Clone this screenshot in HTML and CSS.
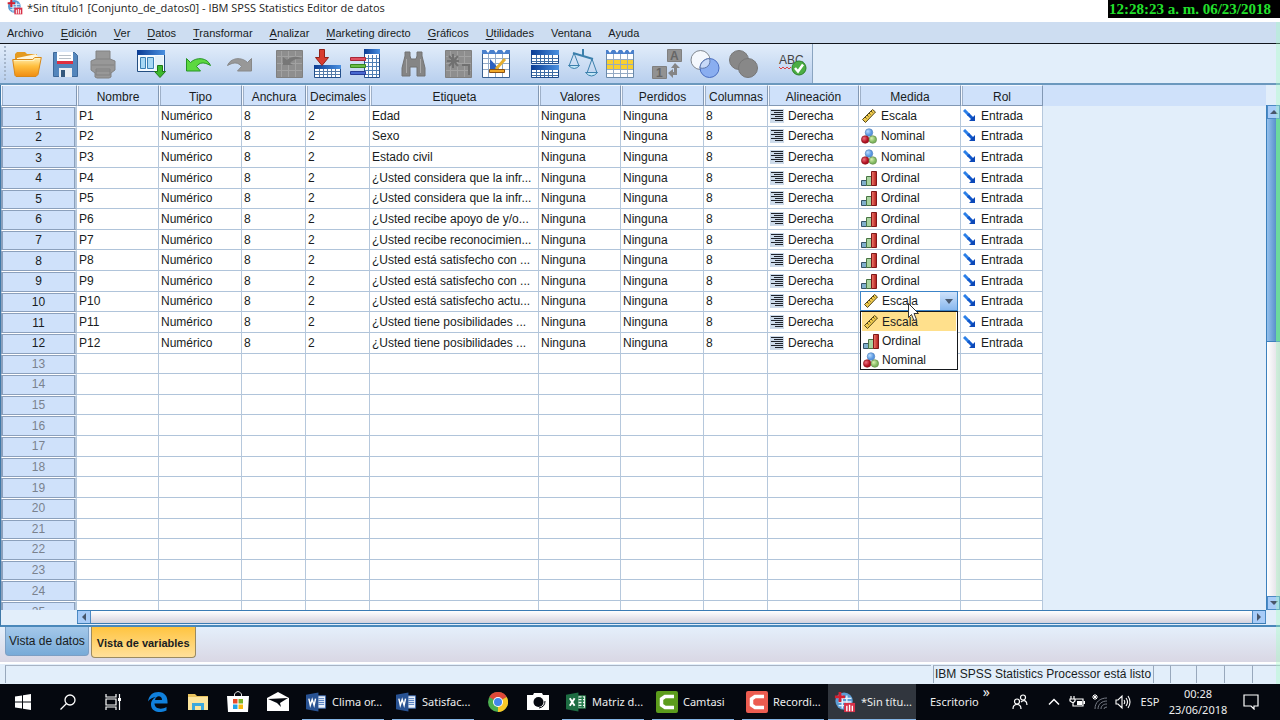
FILE: index.html
```html
<!DOCTYPE html>
<html lang="es">
<head>
<meta charset="utf-8">
<title>*Sin título1 [Conjunto_de_datos0] - IBM SPSS Statistics Editor de datos</title>
<link rel="stylesheet" href="styles.css">
</head>
<body>
<svg class="defs" aria-hidden="true">
  <defs>
    <linearGradient id="g-folder" x1="0" y1="0" x2="0" y2="1"><stop offset="0" stop-color="#fff0b8"/><stop offset=".45" stop-color="#ffc040"/><stop offset="1" stop-color="#f08c10"/></linearGradient>
    <linearGradient id="g-blue" x1="0" y1="0" x2="1" y2="0"><stop offset="0" stop-color="#0a3c94"/><stop offset="1" stop-color="#4a90e0"/></linearGradient>
    <linearGradient id="g-red" x1="0" y1="0" x2="1" y2="0"><stop offset="0" stop-color="#f08070"/><stop offset="1" stop-color="#b01818"/></linearGradient>
    <radialGradient id="g-rball" cx=".35" cy=".35"><stop offset="0" stop-color="#f07080"/><stop offset="1" stop-color="#b01020"/></radialGradient>
    <radialGradient id="g-bball" cx=".35" cy=".35"><stop offset="0" stop-color="#b8dcff"/><stop offset="1" stop-color="#5896e0"/></radialGradient>
    <radialGradient id="g-gball" cx=".35" cy=".35"><stop offset="0" stop-color="#d8f0b0"/><stop offset="1" stop-color="#80b860"/></radialGradient>
    <symbol id="right" viewBox="0 0 14 14"><path fill="#ccdaea" d="M0 0h14v14H0z"/><path stroke="#20242c" d="M1 1.500h12M4 3.500h9M1 5.500h12M5 7.500h8M1 9.500h12M5 11.500h8"/></symbol>
    <symbol id="escala" viewBox="0 0 16 16"><path fill="#edc84c" stroke="#55481a" d="M1.500 11.500 11.500 1.500l3 2.500-10 10.500z"/><path stroke="#55481a" d="m4 9 1.500 1.500M6 7l1.500 1.500M8 5l1.500 1.500M10 3l1.500 1.500"/></symbol>
    <symbol id="nominal" viewBox="0 0 16 16"><circle cx="8" cy="4.500" r="3.800" fill="url(#g-bball)" stroke="#5080b8" stroke-width=".6"/><circle cx="4.200" cy="11.500" r="3.800" fill="url(#g-rball)" stroke="#801018" stroke-width=".6"/><circle cx="11.800" cy="11.500" r="3.800" fill="url(#g-gball)" stroke="#588040" stroke-width=".6"/></symbol>
    <symbol id="ordinal" viewBox="0 0 16 16"><path fill="#80b0cc" stroke="#365468" d="M.5 10.500h5v5h-5z"/><path fill="#a8d4a0" stroke="#4a7444" d="M5.500 6.500h5v9h-5z"/><path fill="url(#g-red)" stroke="#801818" d="M10.500 1.500h5v14h-5z"/></symbol>
    <symbol id="entrada" viewBox="0 0 14 14"><path stroke="#2c80e8" stroke-width="3" d="m1 1 5 5"/><path stroke="#1058cc" stroke-width="3" d="m5 5 5 5"/><path fill="#0c48b8" d="M12 6v6H6z"/></symbol>
    <symbol id="spss" viewBox="0 0 24 24"><circle cx="11" cy="11" r="9.500" fill="#5c9cd4"/><path stroke="#e6f2fc" stroke-width="1.500" fill="none" d="M5 8h14M5 12h14M5 16h10M9 5v14M14 5v14"/><path fill="#d42030" d="M5 1h3v4h4v3H8v4H5V8H1V5h4z"/><path fill="#d83048" d="M11 13h12v10H11z"/><path stroke="#fff" stroke-width="1.500" d="M14 16v6M17 15v7M20 16v6"/></symbol>
    <symbol id="word" viewBox="0 0 22 20"><path fill="#e8f0fa" stroke="#3a66ac" d="M11 3.500h9.500v13H11z"/><path stroke="#4a78bc" d="M13 6.500h6M13 8.500h6M13 10.500h6M13 12.500h6"/><path fill="#285293" d="M0 2.500 13 0v20L0 17.500z"/><path fill="none" stroke="#fff" stroke-width="1.500" d="m3 6.500 1.500 7 2-6 2 6L10 6.500"/></symbol>
  </defs>
</svg>

<div class="window">
  <header class="titlebar">
    <svg class="i16"><use href="#spss"/></svg>
    <h1>*Sin título1 [Conjunto_de_datos0] - IBM SPSS Statistics Editor de datos</h1>
    <time class="stamp">12:28:23 a. m. 06/23/2018</time>
  </header>

  <nav class="menubar">
    <button>Archivo</button><button><u>E</u>dición</button><button><u>V</u>er</button><button><u>D</u>atos</button><button><u>T</u>ransformar</button><button><u>A</u>nalizar</button><button><u>M</u>arketing directo</button><button><u>G</u>ráficos</button><button><u>U</u>tilidades</button><button>Ventana</button><button>Ayuda</button>
  </nav>

  <div class="toolrow">
    <div class="toolbar" role="toolbar" aria-label="Herramientas">
      <span class="grip"></span>
      <div class="group">
        <button aria-label="Abrir"><svg viewBox="0 0 30 30"><path fill="#e49a20" d="M3 25V5l2-2h8l2 2h10v5l-3 17z"/><path fill="#fff6dc" d="m5 9 19-4 2 3v14H5z"/><path fill="url(#g-folder)" stroke="#d88818" d="M.7 10.500h20l2-2h6.600L26 25.500l-2 2H4l-1-1z"/><path stroke="#fff3c0" d="M2 11.500h20l1-2h5"/></svg></button>
        <button aria-label="Guardar"><svg viewBox="0 0 30 30"><path fill="#5486bc" stroke="#3e6898" d="M3.500 3.500h21l3 3v21h-24z"/><path fill="#fff" d="M7 3h16v12H7z"/><path stroke="#b8c0c8" d="M9 6.500h12M9 9.500h12"/><path fill="#e03040" d="M7 12h16v3H7z"/><path fill="#e8edf2" d="M9 19h13v9H9z"/><path fill="#34587c" d="M11 21h4v7h-4z"/></svg></button>
        <button aria-label="Imprimir"><svg viewBox="0 0 30 30"><path fill="#989898" stroke="#828282" d="M8 2h14v8l5 2v9l-4 3v4l-2 1H9l-2-1v-4l-4-3v-9l5-2z"/><path stroke="#828282" fill="none" d="M8 10h14M4 16h22M8 20h14v6H8zM8 22h14"/></svg></button>
      </div>
      <div class="group">
        <button aria-label="Cuadros recientes"><svg viewBox="0 0 30 30"><path fill="#f4faff" stroke="#234e80" d="M1.500 1.500h27v21h-27z"/><path fill="url(#g-blue)" d="M1 1h28v5H1z"/><path fill="#a8d8f4" stroke="#3a80b4" d="M4.500 8.500h5v11h-5zM11.500 8.500h6v11h-6z"/><path fill="#e4f0f8" d="M19 7h8v14h-8z"/><path fill="#3cb82c" stroke="#207818" d="M21.500 16.500h5v6h3L24 28.500l-5.500-6h3z"/></svg></button>
      </div>
      <div class="group">
        <button aria-label="Deshacer"><svg viewBox="0 0 30 30"><path fill="#5cd840" stroke="#269424" d="m2.500 9.500 4 4c6-6 17-5 20 3-7-4-11-3-14 1l4 4.500h-14z"/></svg></button>
        <button aria-label="Rehacer"><svg viewBox="0 0 30 30"><path fill="#989898" stroke="#888" d="m29.500 9.500-4 4c-6-6-17-5-20 3 7-4 11-3 14 1l-4 4.500h14z"/></svg></button>
      </div>
      <div class="group wide">
        <button aria-label="Ir a caso"><svg viewBox="0 0 30 30"><path fill="#8e8e8e" stroke="#808080" d="M2.500 1.500h26v27h-26z"/><path stroke="#a2a2a2" d="M7.500 2v26M14.500 2v26M21.500 2v26M3 7.500h25M3 14.500h25M3 21.500h25"/><path fill="#777" d="M9 8l4 3c5-4 11-4 15-1-6-1-9 1-12 4l3 2H9z"/></svg></button>
        <button aria-label="Ir a variable"><svg viewBox="0 0 30 30"><path fill="#fff" stroke="#24508c" d="M2.500 17.500h26v11h-26z"/><path fill="url(#g-blue)" d="M2 16h27v4H2z"/><path stroke="#547aa8" d="M3 22.500h25M3 25.500h25M7.500 20v8M11.500 20v8M15.500 20v8M19.500 20v8M23.500 20v8"/><path fill="#d83c30" stroke="#902018" d="M7.500.5h5v8h4L10 16.500l-6.500-8h4z"/></svg></button>
        <button aria-label="Variables"><svg viewBox="0 0 30 30"><path fill="#fff" stroke="#24508c" d="M14.500.5h15v28h-15z"/><path fill="url(#g-blue)" d="M14 0h16v5H14z"/><path stroke="#5080b4" d="M15 9.500h14M15 13.500h14M15 17.500h14M15 21.500h14M15 25.500h14M18.500 6v22M22.500 6v22M26.500 6v22"/><path fill="#e05060" stroke="#a82838" d="M.5 8.500h15v3H.5z"/><path fill="#68bc44" stroke="#388820" d="M.5 15.500h15v3H.5z"/><path fill="#4868d0" stroke="#283c98" d="M.5 22.500h15v3H.5z"/></svg></button>
      </div>
      <div class="group">
        <button aria-label="Buscar"><svg viewBox="0 0 30 30"><path fill="#858585" stroke="#727272" d="M7 3h5v4l1 3h5l1-3V3h5v4l3 12v8h-8v-9h-7v9H4v-8L7 7z"/><path stroke="#aaa" d="M8.500 10v14M22.500 10v14"/></svg></button>
      </div>
      <div class="group tight">
        <button aria-label="Insertar caso"><svg viewBox="0 0 30 30"><path fill="#8e8e8e" stroke="#808080" d="M1.500 1.500h26v27h-26z"/><path stroke="#a2a2a2" d="M6.500 2v26M13.500 2v26M20.500 2v26M2 7.500h25M2 14.500h25M2 21.500h25"/><path stroke="#707070" stroke-width="2" fill="none" d="M9 5v14M3 12h12M5 7l9 10M14 7 5 17M18 16h7v10"/></svg></button>
        <button aria-label="Insertar variable"><svg viewBox="0 0 30 30"><path fill="#fff" stroke="#3a6090" d="M.5 1.500h27v27H.5z"/><path fill="#4a80cc" d="M0 1h28v4H0z"/><path stroke="#92aac8" d="M6.500 5v23M13.500 5v23M20.500 5v23M1 9.500h26M1 14.500h26M1 20.500h26"/><path fill="#fff" d="m4 1 2 3 2-3zm8 0 2 3 2-3zm8 0 2 3 2-3z"/><path fill="#2c60c0" d="M8 10v11h10z"/><path stroke="#e4ae30" stroke-width="3" d="m14 20 9-10"/><path fill="#f0a828" stroke="#8c5010" d="M7.500 20.500h15v3h-15z"/></svg></button>
      </div>
      <div class="group">
        <button aria-label="Segmentar archivo"><svg viewBox="0 0 30 30"><path fill="#fff" stroke="#1c4a8c" d="M1.500 1.500h27v13h-27zM1.500 16.500h27v12h-27z"/><path fill="url(#g-blue)" d="M1 1h28v5H1zM1 16h28v5H1z"/><path stroke="#3e6ca4" d="M2 9.500h26M2 12.500h26M2 23.500h26M2 26.500h26M6.500 6v8M10.500 6v8M14.500 6v8M18.500 6v8M22.500 6v8M6.500 21v7M10.500 21v7M14.500 21v7M18.500 21v7M22.500 21v7"/></svg></button>
        <button aria-label="Ponderar casos"><svg viewBox="0 0 30 30"><g fill="none" stroke="#3c80ac"><path stroke-width="2" d="m5 4 20 6M15 0v7"/><path d="M6 4 1 17h10zM24 10l-5 14h10z"/></g><path fill="#c4e8f8" stroke="#3c80ac" d="M.5 16.500h11q-5 6-11 0zM17.500 23.500h12q-6 7-12 0z"/></svg></button>
        <button aria-label="Seleccionar casos"><svg viewBox="0 0 30 30"><path fill="#fff" stroke="#6a8aaa" d="M.5 1.500h27v27H.5z"/><path fill="#4a80cc" d="M0 1h28v4H0z"/><path fill="#f8d030" d="M1 11h26v9H1z"/><path stroke="#94aac4" d="M7.500 5v23M14.500 5v23M21.500 5v23M1 10.500h26M1 15.500h26M1 20.500h26M1 24.500h26"/><path fill="#fff" d="m2 1 2 3 2-3zm7 0 2 3 2-3zm7 0 2 3 2-3zm6 0 2 3 2-3z"/></svg></button>
      </div>
      <div class="group tight">
        <button aria-label="Etiquetas de valor"><svg class="lettered" viewBox="0 0 30 30"><path fill="#929292" stroke="#808080" d="M15.500.5h14v12h-14zM.5 17.500h14v12H.5z"/><text x="18" y="11">A</text><text x="4" y="28">1</text><path fill="#858585" d="m23 14-4 5h3v4h-1v-3l-5 4 5 5v-3h4v-7h3z"/></svg></button>
        <button aria-label="Usar conjuntos"><svg viewBox="0 0 30 30"><circle cx="10.500" cy="11" r="9.500" fill="#f4f8fd" stroke="#80878f"/><circle cx="19.500" cy="19" r="9.500" fill="#8aaef0" stroke="#4a6ec0"/><path fill="#c8daf8" stroke="#6078a8" d="M10 19c0-5 4-9 9.500-9.500 2 6-3 11-9.500 9.500z"/></svg></button>
        <button aria-label="Mostrar todas las variables"><svg viewBox="0 0 30 30"><circle cx="11" cy="11" r="9.500" fill="#888" stroke="#777"/><circle cx="20" cy="19" r="9.500" fill="#888" stroke="#777"/></svg></button>
      </div>
      <div class="group">
        <button aria-label="Ortografía"><svg class="abc" viewBox="0 0 30 30"><text x="3" y="15">ABC</text><path fill="none" stroke="#e04040" d="m3 18 2 2 2-2 2 2 2-2 2 2 2-2"/><circle cx="23" cy="19" r="7" fill="#4cae44" stroke="#2c8028"/><path fill="none" stroke="#fff" stroke-width="2.500" d="m19 19 3 3.500 5-7"/></svg></button>
      </div>
    </div>
  </div>

  <main class="editor">
    <div class="sheet">
      <table class="vars">
        <colgroup><col class="w76"><col class="w82"><col class="w83"><col class="w64"><col class="w64"><col class="w169"><col class="w82"><col class="w83"><col class="w64"><col class="w91"><col class="w102"><col class="w82"></colgroup>
        <thead><tr><th aria-label="Fila"></th><th>Nombre</th><th>Tipo</th><th>Anchura</th><th>Decimales</th><th>Etiqueta</th><th>Valores</th><th>Perdidos</th><th>Columnas</th><th>Alineación</th><th>Medida</th><th>Rol</th></tr></thead>
        <tbody id="rows"></tbody>
      </table>
    </div>
    <div class="vscroll"><span class="btn up"></span><span class="thumb"></span><span class="track"></span><span class="btn down"></span></div>
    <div class="hscroll"><span class="btn left"></span><span class="track"></span><span class="btn next"></span></div>
  </main>

  <div class="views">
    <button class="view">Vista de datos</button>
    <button class="view active">Vista de variables</button>
  </div>

  <footer class="status">
    <span class="message"></span><span class="processor">IBM SPSS Statistics Processor está listo</span><span class="slot"></span><span class="slot m"></span><span class="slot l"></span><span class="slot l"></span><span class="slot l"></span>
  </footer>
  <span class="edge"></span>
</div>

<div class="taskbar">
  <div class="system">
    <button aria-label="Inicio"><svg class="i16" viewBox="0 0 16 16"><path fill="#fff" d="m0 2.500 7-1v6H0zM8 1.300 16 0v7.500H8zM0 8.500h7v6l-7-1zM8 8.500h8V16l-8-1.300z"/></svg></button>
    <button aria-label="Buscar"><svg class="i16" viewBox="0 0 16 16"><g fill="none" stroke="#fff" stroke-width="1.300"><circle cx="10" cy="6" r="5"/><path d="M6.500 9.500.5 15.500"/></g></svg></button>
    <button aria-label="Vista de tareas"><svg class="i16" viewBox="0 0 16 16"><path fill="none" stroke="#fff" stroke-width="1.200" d="M1 0v3h10V0M1 5h10v6H1zM1 16v-3h10v3M14.500 0v16"/><path fill="#fff" d="M13 4h3v3h-3z"/></svg></button>
  </div>
  <div class="pins first">
    <button aria-label="Edge"><svg class="i20" viewBox="0 0 20 20"><path fill="#1080dc" d="M0 9.500C1 3 5 0 10.500 0 17 0 20 5 19.500 11.500H6.500c.3 5.500 7 6.500 12 3.500v3.500C11 22 3 19.500 3 12.500 3 8.500 5.500 6 8 5 4.500 5.500 1.500 7 0 9.500zM7 8h7c0-5-6-5-7 0z"/></svg></button>
    <button aria-label="Explorador"><svg class="i20" viewBox="0 0 20 20"><path fill="#e8c25c" d="M0 2h7l2 2h11v14H0z"/><path fill="#fbe49c" d="M0 5h20v13H0z"/><path fill="#3ca8dc" d="M4 11h12v7h-3v-4H7v4H4z"/></svg></button>
    <button aria-label="Tienda"><svg class="i22" viewBox="0 0 22 22"><path fill="none" stroke="#ddd" d="M7.500 6V3q3.500-5 7 0v3"/><path fill="#fff" d="M0 5h22l-1 16H1z"/><path fill="#e84c28" d="M6 8h4.500v4.500H6z"/><path fill="#78b428" d="M11.500 8H16v4.500h-4.500z"/><path fill="#20a4e8" d="M6 13.500h4.500V18H6z"/><path fill="#f8b810" d="M11.500 13.500H16V18h-4.500z"/></svg></button>
    <button aria-label="Correo"><svg class="i22" viewBox="0 0 22 20"><path fill="#fff" d="m0 6 11-6 11 6v13H0z"/><path fill="#05080f" d="m1 7 20-1-8 5 1 4-4-4z"/></svg></button>
  </div>
  <button class="task"><svg class="i20w"><use href="#word"/></svg>Clima or...</button>
  <button class="task"><svg class="i20w"><use href="#word"/></svg>Satisfac...</button>
  <div class="pins">
    <button aria-label="Chrome"><svg class="i20" viewBox="0 0 20 20"><circle cx="10" cy="10" r="10" fill="#4caf50"/><path fill="#e04838" d="M10 10 1.300 5A10 10 0 0 1 18.700 5z"/><path fill="#f8c828" d="M10 10l8.700-5A10 10 0 0 1 10 20z"/><circle cx="10" cy="10" r="5" fill="#fff"/><circle cx="10" cy="10" r="4" fill="#4486ec"/></svg></button>
    <button aria-label="Cámara"><svg class="i22" viewBox="0 0 22 20"><path fill="#fff" d="M0 3h6l1-2h8l1 2h6v15H0z"/><circle cx="11.500" cy="10" r="5" fill="#05080f"/><path stroke="#05080f" fill="none" d="M18 9q0 6-6 7"/></svg></button>
  </div>
  <button class="task"><svg class="i20w" viewBox="0 0 22 20"><path fill="#eef8f0" stroke="#1e7040" d="M11 3.500h9.500v13H11z"/><path stroke="#207848" stroke-width="1.500" d="M13 6h6M13 9h6M13 12h6M13 15h6M17 4v12"/><path fill="#1d6c42" d="M0 2.500 13 0v20L0 17.500z"/><path stroke="#fff" stroke-width="2" d="m4 6 5 8M9 6l-5 8"/></svg>Matriz d...</button>
  <button class="task"><svg class="i22" viewBox="0 0 22 22"><rect width="22" height="22" rx="2" fill="#5c9c1c"/><path fill="none" stroke="#fff" stroke-width="3.500" d="M18 5.500H9L5.500 8v6L9 16.500h9"/></svg>Camtasi</button>
  <button class="task"><svg class="i22" viewBox="0 0 22 22"><rect width="22" height="22" rx="2" fill="#ec5c50"/><path fill="none" stroke="#fff" stroke-width="3.500" d="M18 5.500H9L5.500 8v6L9 16.500h9"/></svg>Recordi...</button>
  <button class="task current"><svg class="i22"><use href="#spss"/></svg>*Sin títu...</button>
  <div class="tray">
    <button class="desk">Escritorio</button><span class="more">»</span>
    <button class="people" aria-label="Contactos"><svg class="i16" viewBox="0 0 16 16"><g fill="none" stroke="#fff" stroke-width="1.200"><circle cx="5" cy="7.500" r="2.500"/><path d="M1 15c0-6 8-6 8 0"/><circle cx="11" cy="3.500" r="2.500"/><path d="M9 8c3-3 6-1 6 3"/></g></svg></button>
    <button aria-label="Mostrar iconos ocultos"><svg class="i16" viewBox="0 0 16 16"><path fill="none" stroke="#fff" stroke-width="1.500" d="m3 10.500 5-5 5 5"/></svg></button>
    <button aria-label="Batería"><svg class="i16" viewBox="0 0 16 16"><path fill="none" stroke="#fff" stroke-width="1.200" d="M5 5h9v7H4V8M2 2v3M5 2v3M1 5h5v2l-2 2-3-2z"/><path fill="#fff" d="M8 7h5v4H8zM14.500 7H16v3h-1.500z"/></svg></button>
    <button aria-label="Red"><svg class="i16" viewBox="0 0 16 16"><g fill="none" stroke="#777c86"><path d="M3 15C3 8 8 4 15 4M6 15c0-5 4-8 9-8M9 15c0-3 2-5 6-5M12 15q0-2 3-2"/></g><path stroke="#fff" d="M3 0v6M0 3h6M1 1l4 4M5 1 1 5"/></svg></button>
    <button aria-label="Volumen"><svg class="i16" viewBox="0 0 16 16"><path fill="none" stroke="#fff" stroke-width="1.100" d="M1 6h2l4-4v12l-4-4H1zM9 6q1.500 2 0 4M11 4q3 4 0 8M13 2q4 6 0 12"/></svg></button>
    <button class="lang">ESP</button>
    <button class="clock"><span>00:28</span><span>23/06/2018</span></button>
    <button class="notes" aria-label="Notificaciones"><svg class="i16" viewBox="0 0 16 16"><path fill="none" stroke="#fff" stroke-width="1.200" d="M1 1h14v11h-4v3l-3-3H1z"/></svg></button>
  </div>
</div>
<script src="script.js"></script>
</body>
</html>
```
FILE: styles.css
```css
* { box-sizing: border-box; }
body {
  margin: 0;
  height: 100vh;
  display: flex;
  flex-direction: column;
  overflow: hidden;
  font: 12px/16px "Liberation Sans", sans-serif;
  color: #181c22;
}
button, select { font: inherit; color: inherit; border: 0; padding: 0; margin: 0; background: none; }
svg { display: block; flex: none; fill: none; }
.defs { position: absolute; width: 0; height: 0; }
.i14 { width: 14px; height: 14px; }
.i16 { width: 16px; height: 16px; }
.i20 { width: 20px; height: 20px; }
.i20w { width: 21px; height: 20px; }
.i22 { width: 22px; height: 22px; }

.window { position: relative; flex: 1; min-height: 0; display: flex; flex-direction: column; background: #e2eefa; }
.edge { position: absolute; top: 22px; right: 0; bottom: 0; width: 4px; background: rgba(160, 255, 190, .35); pointer-events: none; }

.titlebar { height: 22px; display: flex; align-items: flex-start; padding-left: 7px; gap: 4px; background: #fff; }
.titlebar h1 { flex: 1; margin: 0; font: 11px/15px "Open Sans", sans-serif; color: #222; }
.titlebar svg { margin-top: -1px; }
.stamp { height: 18px; padding: 0 9px 0 1px; background: #000; color: #22e02c; font: bold 15px/18px "Liberation Serif", serif; white-space: nowrap; }

.menubar { height: 22px; display: flex; gap: 17px; padding: 0 7px; background: #cdddf1; border-bottom: 1px solid #10151c; white-space: nowrap; font-size: 11px; }
.menubar u { text-underline-offset: 2px; }

.toolrow { display: flex; border-bottom: 2px solid #6b98bd; background: #e2eefa; }
.toolbar { display: flex; align-items: center; height: 39px; padding-right: 2px; border-right: 1px solid #8aa4c0; background: linear-gradient(#e2edfa, #b8cfee); }
.grip { width: 4px; height: 37px; margin: 0 1px 0 3px; background: radial-gradient(circle, #a6b6ca 1px, transparent 1px) 0 0 / 4px 4px; }
.group { display: flex; margin-left: 10px; }
.grip + .group { margin-left: 0; }
.group.tight { margin-left: 8px; }
.group.wide { margin-left: 14px; }
.group button { width: 38px; height: 36px; display: grid; place-items: center; }
.group svg { width: 30px; height: 30px; }
.lettered text { font: bold 12px "Liberation Sans", sans-serif; fill: #666; }
.abc { overflow: visible; }
.abc text { font: 12px "Liberation Sans", sans-serif; fill: #444; }

.editor { flex: 1; min-height: 0; display: grid; grid-template: minmax(0, 1fr) 15px / minmax(0, 1fr) 14px; border-left: 1px solid #3e78a8; border-bottom: 2px solid #4a88ba; }
.sheet { overflow: hidden; background: linear-gradient(#cfe1fa 21px, #e2eefa 21px); }
.vars { width: 1042px; height: 537px; table-layout: fixed; border-collapse: separate; border-spacing: 0; }
.w64 { width: 64px; } .w76 { width: 76px; } .w82 { width: 82px; } .w83 { width: 83px; }
.w91 { width: 91px; } .w102 { width: 102px; } .w169 { width: 169px; }
.vars th, .vars td { padding: 0; white-space: nowrap; font-weight: normal; line-height: 16px; }
.vars thead th { height: 21px; text-align: center; background: #cfe1fa; border: 1px solid #8298b4; border-top-color: #f4f8ff; border-left-color: #f4f8ff; box-shadow: inset 1px 0 #9eb0c8; padding-top: 2px; }
.vars tbody td { background: #fff; border-right: 1px solid #b6c8dc; border-bottom: 1px solid #b0c4da; padding-left: 2px; overflow: hidden; }
.vars tbody th { text-align: center; background: #cfe1fa; border: 1px solid #8ba0bc; border-top-color: #fff; border-right: 2px solid #b6c8dc; box-shadow: inset 1px 1px #8ba0bc, inset -1px 0 #8ba0bc; }
.vars .unused th { color: #7a828e; }
.vars .iconic { display: flex; align-items: center; gap: 4px; }
.vars td.open { position: relative; overflow: visible; padding: 0 2px 0 1px; }

.combo { display: flex; align-items: center; height: 20px; margin: -2px 0; padding-left: 2px; gap: 3px; border: 1px solid #3c84c8; background: #fff; }
.combo select { flex: 1; min-width: 0; appearance: none; }
.combo .arrow { align-self: stretch; width: 17px; display: grid; place-items: center; background: linear-gradient(#cfe2fa, #88b8ee); }
.arrow::after { content: ""; border: 4px solid transparent; border-top: 5px solid #4a5a70; border-bottom: 0; }
.options { position: absolute; z-index: 2; top: 100%; left: 1px; right: 2px; margin: 0; padding: 0 1px; list-style: none; background: #fff; border: 1px solid #15181c; }
.options li { display: flex; align-items: center; gap: 3px; height: 19px; padding-left: 1px; }
.options li.selected { background: #ffe08c; }
.pointer { position: absolute; z-index: 3; left: 48px; top: 10px; width: 13px; height: 20px; }

.vscroll { display: flex; flex-direction: column; margin-top: 20px; border-left: 1px solid #3c80bc; }
.btn { display: grid; place-items: center; background: #a8ccf8; border: 1px solid #4c8ac4; }
.btn::after { content: ""; border: 4px solid transparent; }
.vscroll .btn { height: 14px; }
.up::after { border-bottom-color: #48566a; border-top: 0; }
.down::after { border-top-color: #48566a; border-bottom: 0; }
.left::after { border-right-color: #48566a; border-left: 0; }
.next::after { border-left-color: #48566a; border-right: 0; }
.vscroll .thumb { flex: 223; background: linear-gradient(90deg, #94c0ec, #5890cc 9px, #50c48c 9px); border-bottom: 1px solid #3c80bc; }
.vscroll .track { flex: 255; background: linear-gradient(90deg, #fff, #dcdae2); }
.hscroll { display: flex; margin-left: 76px; height: 14px; border: solid #3a7cb4; border-width: 1px 0; }
.hscroll .btn { width: 14px; border-width: 0 1px; }
.hscroll .track { flex: 1; background: linear-gradient(#fff, #d5d3de); }

.views { display: flex; align-items: flex-start; gap: 2px; height: 36px; padding-left: 5px; background: linear-gradient(#e4effb, #d9d7e4); border-bottom: 1px solid #fff; }
.view { height: 29px; padding: 0 3px; border: 1px solid #7c9fc4; border-top: 0; border-radius: 0 0 4px 4px; background: linear-gradient(#a4c8ea, #78abd8); }
.view.active { height: 31px; padding: 2px 5px 0; font-size: 11px; font-weight: bold; border-color: #9a8a60; background: linear-gradient(#ffc440, #ffe09a); }

.status { display: flex; height: 21px; padding: 1px 0 1px 5px; background: #e2eefa; border-top: 1px solid #fff; }
.status span { border-left: 1px solid #98a8bc; border-top: 1px solid #a8b4c4; }
.status .message { flex: 1; margin-right: 2px; }
.status .processor { flex: none; width: 220px; padding-left: 1px; line-height: 17px; white-space: nowrap; }
.status .slot { width: 17px; }
.status .m { width: 26px; }
.status .l { width: 28px; }

.taskbar { display: flex; height: 36px; background: #05080f; color: #eee; font: 12px/16px "Noto Sans", sans-serif; white-space: nowrap; }
.taskbar button { display: flex; align-items: center; justify-content: center; }
.system, .pins { display: flex; }
.system button { width: 45px; }
.pins button { width: 40px; }
.pins.first { margin-left: 3px; }
.taskbar .task { width: 82px; margin: 0 4px; padding-left: 4px; gap: 5px; justify-content: flex-start; border-bottom: 1px solid #84b4e4; overflow: hidden; font-size: 11px; }
.taskbar .current { width: 88px; margin-left: 0; padding-left: 6px; background: #31363e; }
.tray { flex: 1; display: flex; justify-content: flex-end; padding-right: 8px; font-size: 11px; }
.tray button { width: 23px; }
.tray .desk { width: auto; margin-left: 10px; }
.tray .more { margin: 0 auto 0 4px; font-size: 14px; }
.tray .people { width: 26px; margin-right: 9px; }
.tray .lang { width: 32px; }
.tray .clock { width: 64px; flex-direction: column; }
.tray .notes { width: 42px; }
```
FILE: script.js
```js
const labels = [
  "Edad",
  "Sexo",
  "Estado civil",
  "¿Usted considera que la infr...",
  "¿Usted considera que la infr...",
  "¿Usted recibe apoyo de y/o...",
  "¿Usted recibe reconocimien...",
  "¿Usted está satisfecho con ...",
  "¿Usted está satisfecho con ...",
  "¿Usted está satisfecho actu...",
  "¿Usted tiene posibilidades ...",
  "¿Usted tiene posibilidades ..."
];
const measures = ["Escala", "Nominal", "Nominal", "Ordinal", "Ordinal", "Ordinal",
  "Ordinal", "Ordinal", "Ordinal"];
const openRow = 10;
const totalRows = 25;

const icon = (id, size) => `<svg class="i${size}"><use href="#${id}"/></svg>`;
const iconic = (id, size, text) => `<div class="iconic">${icon(id, size)}${text}</div>`;
const option = (name, selected) =>
  `<li role="option"${selected ? ' class="selected"' : ""}>${icon(name.toLowerCase(), 16)}${name}</li>`;

const combo = `
  <div class="combo">${icon("escala", 16)}
    <select aria-label="Medida"><option>Escala</option><option>Ordinal</option><option>Nominal</option></select>
    <span class="arrow"></span>
  </div>
  <ul class="options" role="listbox" aria-label="Medida">${option("Escala", true)}${option("Ordinal")}${option("Nominal")}</ul>
  <svg class="pointer" viewBox="0 0 13 20"><path fill="#fff" stroke="#333" d="M1.500 1.500v14l3-3 2.500 6 2.500-1-2.500-6h4.500z"/></svg>`;

let html = "";
for (let n = 1; n <= totalRows; n++) {
  if (n > labels.length) {
    html += `<tr class="unused"><th>${n}</th>${"<td></td>".repeat(11)}</tr>`;
    continue;
  }
  const measure = measures[n - 1];
  const cells = [`P${n}`, "Numérico", "8", "2", labels[n - 1], "Ninguna", "Ninguna", "8",
    iconic("right", 14, "Derecha")];
  const measureCell = n === openRow
    ? `<td class="open">${combo}</td>`
    : `<td>${measure ? iconic(measure.toLowerCase(), 16, measure) : ""}</td>`;
  html += `<tr><th>${n}</th>${cells.map(c => `<td>${c}</td>`).join("")}${measureCell}` +
    `<td>${iconic("entrada", 14, "Entrada")}</td></tr>`;
}
document.getElementById("rows").innerHTML = html;
```
